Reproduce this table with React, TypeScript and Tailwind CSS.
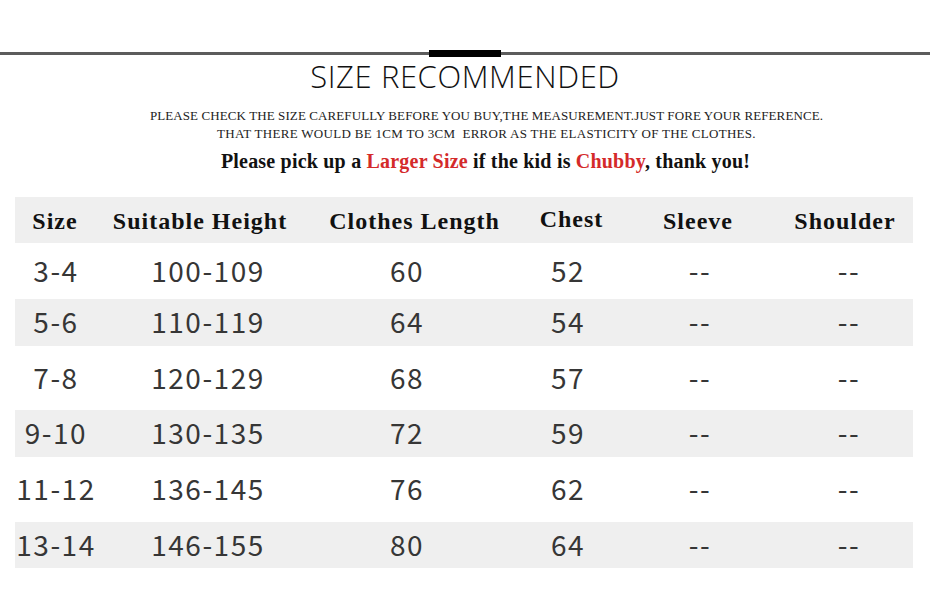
import React from "react";

const headers = ["Size", "Suitable Height", "Clothes Length", "Chest", "Sleeve", "Shoulder"];

const rows: { cells: string[]; h: string; bg: boolean }[] = [
  { cells: ["3-4", "100-109", "60", "52", "--", "--"], h: "h-[56px]", bg: false },
  { cells: ["5-6", "110-119", "64", "54", "--", "--"], h: "h-[47px]", bg: true },
  { cells: ["7-8", "120-129", "68", "57", "--", "--"], h: "h-[64px]", bg: false },
  { cells: ["9-10", "130-135", "72", "59", "--", "--"], h: "h-[47px]", bg: true },
  { cells: ["11-12", "136-145", "76", "62", "--", "--"], h: "h-[65px]", bg: false },
  { cells: ["13-14", "146-155", "80", "64", "--", "--"], h: "h-[46px]", bg: true },
];

const headCols = "grid grid-cols-[80px_210px_219px_95px_158px_136px]";
const dataCols = "grid grid-cols-[82px_222px_176px_146px_118px_154px]";

export default function App() {
  return (
    <div className="w-[930px] h-[601px] bg-white overflow-hidden">
      <div className="h-[50px]" />
      <div className="relative h-[7px]">
        <div className="absolute left-0 right-0 top-[2px] h-[3px] bg-[#5c5c5c]" />
        <div className="absolute left-[429px] top-0 w-[72px] h-[7px] bg-black" />
      </div>
      <div
        className="mt-[1px] text-center text-[31px] leading-[36px] text-[#111] font-light tracking-[0.6px]"
        style={{ fontFamily: '"Open Sans", sans-serif' }}
      >
        SIZE RECOMMENDED
      </div>
      <div
        className="mt-[13px] pl-[43px] text-center text-[13px] leading-[18px] text-[#222] tracking-[0.1px]"
        style={{ fontFamily: '"Liberation Serif", serif' }}
      >
        <div>PLEASE CHECK THE SIZE CAREFULLY BEFORE YOU BUY,THE MEASUREMENT.JUST FORE YOUR REFERENCE.</div>
        <div className="tracking-[0.3px]">THAT THERE WOULD BE 1CM TO 3CM&nbsp; ERROR AS THE ELASTICITY OF THE CLOTHES.</div>
      </div>
      <div
        className="mt-[6px] pl-[41px] text-center text-[20px] leading-[24px] font-bold text-[#111] tracking-[0.2px]"
        style={{ fontFamily: '"Liberation Serif", serif' }}
      >
        Please pick up a <span className="text-[#d42a2a]">Larger Size</span> if the kid is{" "}
        <span className="text-[#d42a2a]">Chubby</span>, thank you!
      </div>
      <div className="mt-[24px] ml-[15px] w-[898px]">
        <div
          className={`${headCols} h-[46px] bg-[#efefef] items-center text-[24px] font-bold text-[#111] tracking-[1px] pt-[2px]`}
          style={{ fontFamily: '"Liberation Serif", serif' }}
        >
          {headers.map((h) => (
            <div key={h} className={`text-center whitespace-nowrap ${h === "Chest" ? "-mt-[4px]" : ""}`}>
              {h}
            </div>
          ))}
        </div>
        {rows.map((r, i) => (
          <div
            key={i}
            className={`${dataCols} ${r.h} ${r.bg ? "bg-[#efefef]" : "bg-white"} items-center text-[28px] text-[#363636] tracking-[1.5px] pb-[3px]`}
            style={{ fontFamily: '"Noto Sans CJK SC", "Noto Sans", sans-serif' }}
          >
            {r.cells.map((c, j) => (
              <div key={j} className={`text-center whitespace-nowrap leading-none ${j === 5 ? "pl-[26px]" : ""}`}>
                {c}
              </div>
            ))}
          </div>
        ))}
      </div>
    </div>
  );
}
